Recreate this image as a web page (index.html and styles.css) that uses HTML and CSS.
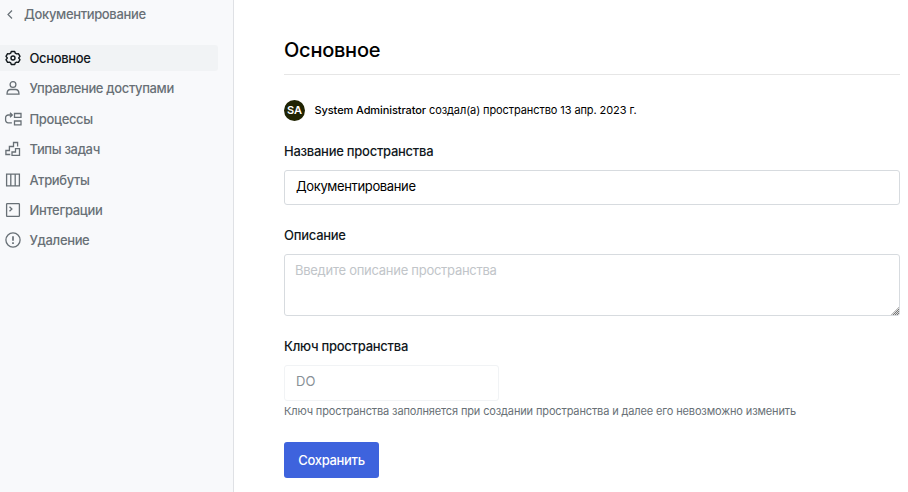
FILE: index.html
```html
<!DOCTYPE html>
<html lang="ru">
<head>
<meta charset="utf-8">
<title>Документирование</title>
<link rel="stylesheet" href="styles.css">
</head>
<body>
<div class="layout">
  <aside class="sidebar">
    <a class="back"><svg class="chevron" viewBox="0 0 6 9"><path d="M5 .5 1 4.500 5 8.500"/></svg><span>Документирование</span></a>
    <nav class="menu">
      <a class="item active"><svg class="icon gear" viewBox="0 0 18 18"><path d="M7.300 2.500h3.400l.6 1.700 1.300.7 1.800-.3 1.600 2.800-1.200 1.300v.6l1.200 1.300-1.600 2.800-1.800-.3-1.300.7-.6 1.700H7.300l-.6-1.700-1.300-.7-1.800.3L2 10.600l1.200-1.300v-.6L2 7.400l1.600-2.800 1.800.3 1.300-.7z"/><circle cx="9" cy="9" r="2"/></svg><span>Основное</span></a>
      <a class="item"><svg class="icon" viewBox="0 0 18 18"><circle cx="9" cy="5.500" r="2.900"/><path d="M3 15.200c0-3 1.400-4.700 3.600-4.700h4.800c2.200 0 3.600 1.700 3.600 4.700z"/></svg><span>Управление доступами</span></a>
      <a class="item"><svg class="icon" viewBox="0 0 18 18"><path d="M7.900 12.800H4.200A2.700 2.700 0 0 1 1.600 10V7.700A2.700 2.700 0 0 1 4.300 5H8M6 2.800 8.300 5 6 7.300M10.500 3.500h6.500v3.800h-6.500zM10.500 11h6.500v3.800h-6.500z"/></svg><span>Процессы</span></a>
      <a class="item"><svg class="icon" viewBox="0 0 18 18"><path d="M6.300 14.500H1.900v-4h3.500v-4h4.100v-4h4.100v4M8 15.300V12h3.500V8.700h4v6.600z"/></svg><span>Типы задач</span></a>
      <a class="item"><svg class="icon" viewBox="0 0 18 18"><path d="M2.600 3.100h12.800v11.800H2.600zM6.800 3.100v11.800M11.200 3.100v11.800"/></svg><span>Атрибуты</span></a>
      <a class="item"><svg class="icon" viewBox="0 0 18 18"><rect x="2.600" y="2.600" width="12.800" height="12.800" rx=".7"/><path d="m5.500 5.700 2.400 2.300-2.400 2.300"/></svg><span>Интеграции</span></a>
      <a class="item"><svg class="icon" viewBox="0 0 18 18"><circle cx="9" cy="9" r="7.100"/><path class="mark" d="M9 5.200v4.600M9 11.200v1.700"/></svg><span>Удаление</span></a>
    </nav>
  </aside>
  <main class="content">
    <h1 class="title"><span>Основное</span></h1>
    <div class="author"><span class="avatar">SA</span><span class="created"><b>System Administrator</b> создал(а) пространство 13 апр. 2023 г.</span></div>
    <label class="label" for="name"><span>Название пространства</span></label>
    <input class="field name" id="name" value="Документирование">
    <label class="label" for="about"><span>Описание</span></label>
    <div class="area"><textarea class="field about" id="about" placeholder="Введите описание пространства"></textarea><i class="grip"></i></div>
    <label class="label" for="key"><span>Ключ пространства</span></label>
    <input class="field key" id="key" value="DO" disabled>
    <p class="hint"><span>Ключ пространства заполняется при создании пространства и далее его невозможно изменить</span></p>
    <button class="save"><span>Сохранить</span></button>
  </main>
</div>
</body>
</html>
```
FILE: styles.css
```css
* { box-sizing: border-box; }
body { margin: 0; background: #fff; color: #111; font: 13px/20px Inter, "Liberation Sans", sans-serif; overflow: hidden; }
.layout { display: flex; height: 492px; }
.sidebar { width: 234px; flex: none; background: #f8f9fb; border-right: 1px solid #dfe1e5; color: #687076; font-weight: 500; letter-spacing: -.35px; }
.back { display: flex; align-items: center; height: 28px; padding-left: 7px; gap: 11px; }
.chevron { width: 6px; height: 9px; fill: none; stroke: currentColor; stroke-width: 1.2; }
.menu { display: flex; flex-direction: column; gap: 4.400px; padding-top: 17px; }
.item { display: flex; align-items: center; width: 218px; height: 26px; padding-left: 4px; gap: 7.500px; border-radius: 0 3px 3px 0; }
.active { background: #f1f3f5; color: #11181c; }
.icon { width: 18px; height: 18px; fill: none; stroke: currentColor; stroke-width: 1.3; }
.gear { stroke-width: 1.400; stroke-linejoin: round; }
.mark { stroke-width: 1.700; }
.content { flex: 1; display: flex; flex-direction: column; align-items: flex-start; padding: 36px 8px 0 50px; }
.title { width: 100%; height: 39px; margin: 0 0 25px; border-bottom: 1px solid #e6e6e6; font-size: 20px; line-height: 28px; font-weight: 500; letter-spacing: -.25px; color: #000; }
.author { display: flex; align-items: center; gap: 9.500px; height: 21px; margin-bottom: 20px; font-size: 11px; letter-spacing: -.09px; color: #000; }
.author b { font-weight: 500; }
.created { padding-bottom: 2px; }
.avatar { width: 21px; height: 21px; border-radius: 50%; background: #202403; color: #fff; font-weight: 600; line-height: 21px; text-align: center; }
.label { height: 20px; margin-bottom: 9px; font-weight: 500; letter-spacing: -.26px; color: #11181c; }
.field { display: block; margin: 0; border: 1px solid #d7dbdf; border-radius: 3px; outline: 0; background: #fff; color: #000; font: inherit; }
.name { width: 100%; height: 35px; padding: 0 11px 3px; margin-bottom: 20px; letter-spacing: -.36px; }
.area { position: relative; width: 100%; margin-bottom: 20px; }
.about { width: 100%; height: 62px; padding: 5px 10px; resize: none; letter-spacing: -.27px; }
.about::placeholder { color: #c1c5c9; }
.grip { position: absolute; right: 1px; bottom: 1px; width: 8px; height: 8px; background: repeating-conic-gradient(#777 0 25%, #ddd 0 50%) 0 0 / 2px 2px; clip-path: polygon(100% 0, 100% 100%, 0 100%); }
.key { width: 215px; height: 36px; padding: 0 11px 4px; border-color: #f1f3f5; color: #889096; }
.hint { margin: 0 0 21px; font-size: 11px; letter-spacing: -.135px; color: #687076; white-space: nowrap; }
.save { width: 95px; height: 36px; padding: 0; border: 0; border-radius: 3px; background: #3e63dd; color: #fff; font: 500 13px/20px Inter, "Liberation Sans", sans-serif; letter-spacing: -.32px; }
```
